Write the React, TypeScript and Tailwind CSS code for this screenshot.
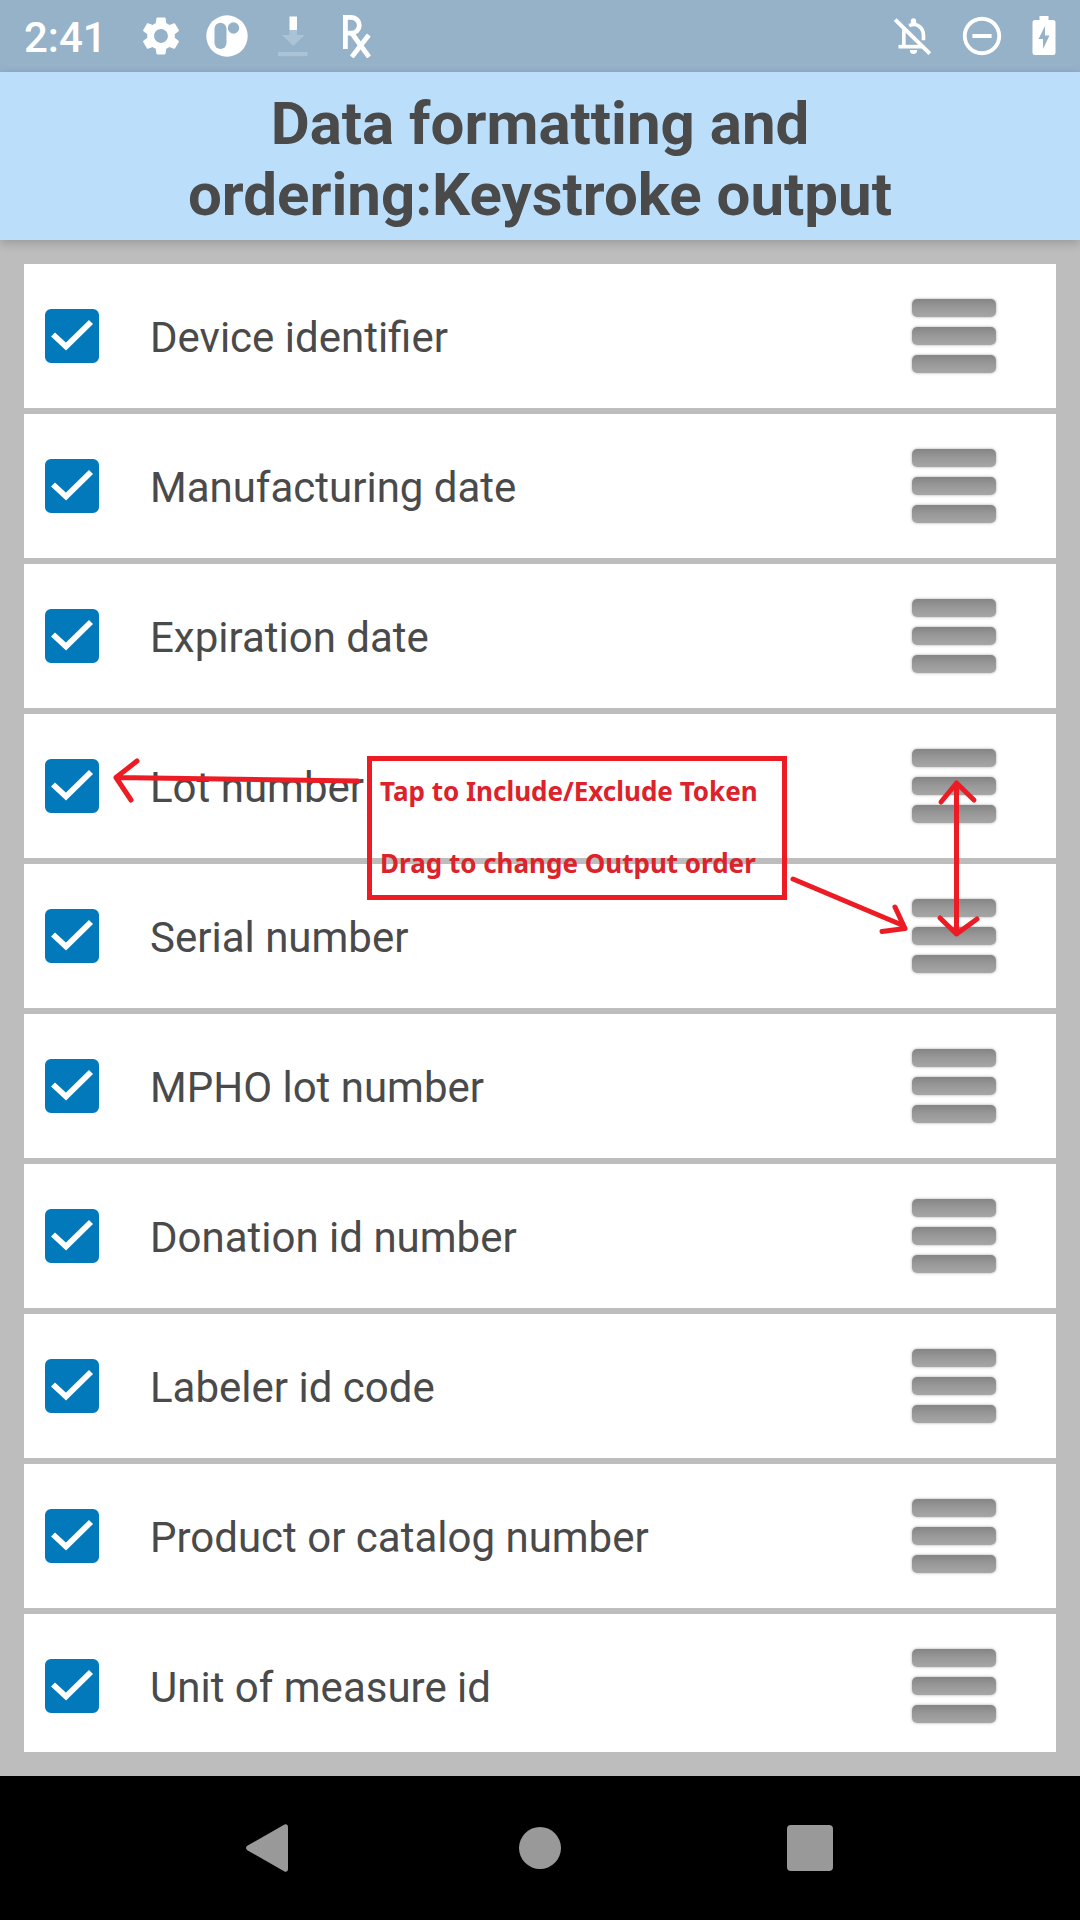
import { useState } from "react";
import { MdRemoveCircleOutline, MdSettings } from "react-icons/md";

const tokens = [
  "Device identifier",
  "Manufacturing date",
  "Expiration date",
  "Lot number",
  "Serial number",
  "MPHO lot number",
  "Donation id number",
  "Labeler id code",
  "Product or catalog number",
  "Unit of measure id",
];

function AppBadgeIcon() {
  return (
    <svg viewBox="0 0 42 42" className="size-[42px]" aria-hidden="true">
      <circle cx="21" cy="21" r="20.7" fill="#fff" />
      <rect x="8.5" y="7.8" width="12" height="26.2" rx="6" fill="#96b2c9" />
      <circle cx="27.5" cy="13" r="5.7" fill="#96b2c9" />
    </svg>
  );
}

function DownloadIcon() {
  return (
    <svg viewBox="0 0 30 42" className="h-[42px] w-[30px]" aria-hidden="true">
      <path d="M11.5 1.5h7.5V15h-7.5z" fill="#fff" />
      <path d="M11.5 15h7.5v5h7.5L15.3 31 4 20h7.500z" fill="#abc3d7" />
      <path d="M0 37h29.500v4.200H0z" fill="#abc3d7" />
    </svg>
  );
}

function PrescriptionIcon() {
  return (
    <svg
      viewBox="0 0 30 44"
      className="h-[44px] w-[30px]"
      fill="none"
      stroke="#fff"
      strokeWidth="4.800"
      aria-hidden="true"
    >
      <path d="M3.400 35V3.400h6a7.400 7.400 0 0 1 0 15.800H3.400" />
      <path d="M10 19.500 27 43" />
      <path d="M26.800 21 9.800 43" />
    </svg>
  );
}

function SilentIcon() {
  return (
    <svg
      viewBox="100 50 116 120"
      className="h-10 w-[39px]"
      fill="none"
      stroke="#fff"
      strokeWidth="11"
      aria-hidden="true"
    >
      <path d="M106 61 210 163" strokeWidth="12" />
      <path d="M132 86v56" />
      <path d="M116 142h70" />
      <path d="M148 79c22-10 43 4 43 30v14" />
      <path d="M153 74v-9a8 8 0 0 1 16 0v9z" fill="#fff" stroke="none" />
      <path d="M150 152h22a11 12 0 0 1-22 0z" fill="#fff" stroke="none" />
    </svg>
  );
}

function BatteryIcon() {
  return (
    <svg viewBox="0 0 24 40" className="h-10 w-6" aria-hidden="true">
      <path
        d="M7.500 0h9v4H21a2.500 2.500 0 0 1 2.500 2.500v30A2.500 2.500 0 0 1 21 39H3a2.500 2.500 0 0 1-2.500-2.500v-30A2.500 2.500 0 0 1 3 4h4.500z"
        fill="#fff"
      />
      <path d="M13 10v9.500h4.500L11 33v-10H6.500z" fill="#96b2c9" />
    </svg>
  );
}

function StatusBar() {
  return (
    <div className="flex h-[72px] shrink-0 items-center justify-between bg-[#96b2c9] px-6 text-white">
      <div className="flex items-center">
        <span className="pt-[3px] text-[42px] leading-[48px] font-medium">2:41</span>
        <MdSettings className="ml-[31px] size-[46px]" aria-hidden="true" />
        <div className="ml-[22px] flex items-center gap-[30px]">
          <AppBadgeIcon />
          <DownloadIcon />
          <span className="ml-1">
            <PrescriptionIcon />
          </span>
        </div>
      </div>
      <div className="flex items-center">
        <SilentIcon />
        <MdRemoveCircleOutline className="ml-[27px] size-[46px]" aria-hidden="true" />
        <span className="ml-[27px]">
          <BatteryIcon />
        </span>
      </div>
    </div>
  );
}

function DragHandle({ name }: { name: string }) {
  return (
    <button
      type="button"
      aria-label={`Reorder ${name}`}
      className="flex w-[84px] cursor-grab flex-col gap-[10px]"
    >
      {[0, 1, 2].map((bar) => (
        <span
          key={bar}
          className="h-[18px] w-full rounded-[5px] bg-linear-to-b from-[#858585] via-[#999999] via-50% to-[#a6a6a6] shadow-[0_0_3px_#a8a8a8]"
        />
      ))}
    </button>
  );
}

function TokenRow({ name }: { name: string }) {
  const [included, setIncluded] = useState(true);
  return (
    <li className="flex h-36 shrink-0 items-center justify-between bg-white pr-[60px] pl-[21px]">
      <label className="flex items-center gap-[51px]">
        <span className="relative size-[54px]">
          <input
            type="checkbox"
            checked={included}
            onChange={() => setIncluded(!included)}
            className="peer block size-[54px] appearance-none rounded-[6px] border-[5px] border-[#757575] checked:border-[#0279bb] checked:bg-[#0279bb]"
          />
          <svg
            viewBox="0 0 54 54"
            className="pointer-events-none absolute inset-0 hidden peer-checked:block"
            fill="none"
            stroke="#fff"
            strokeWidth="5.800"
            aria-hidden="true"
          >
            <path d="M8 25.500 21 37.600 46 13" />
          </svg>
        </span>
        <span className="pt-[3px] text-[42px] leading-[50px] text-[#4a4a4a]">{name}</span>
      </label>
      <DragHandle name={name} />
    </li>
  );
}

function Annotations() {
  return (
    <div className="pointer-events-none absolute top-0 left-0">
      <svg
        viewBox="0 0 1080 760"
        className="h-[760px] w-[1080px] max-w-none"
        fill="none"
        stroke="#ed1c24"
        strokeWidth="5"
        strokeLinecap="round"
        strokeLinejoin="round"
        aria-hidden="true"
      >
        <path d="M358 541 116 537.500M137 521 116 537.500 131 560" />
        <path d="M793 639 902 685M895 667 905 688.500 882 691.500" />
        <path d="M956.500 543V694M941 562 956.500 543 974 560M940 678 956.500 694 977 679" />
      </svg>
      <div className="absolute top-[516px] left-[367px] h-36 w-[420px] border-[5px] border-[#ed1c24] px-2 py-3 font-['Noto_Sans',sans-serif] text-[26px] leading-9 font-bold whitespace-nowrap text-[#dc222a]">
        <p>Tap to Include/Exclude Token</p>
        <p className="pt-9">Drag to change Output order</p>
      </div>
    </div>
  );
}

function NavigationBar() {
  return (
    <nav className="grid h-36 shrink-0 grid-cols-3 items-center justify-items-center bg-black px-[12.5%]">
      <button type="button" aria-label="Back">
        <svg viewBox="0 0 48 48" className="size-12" fill="#999" aria-hidden="true">
          <path d="M1.300 21.800 38.500.600Q42 -.500 42 3v42q0 3.500-3.500 2.400L1.300 26.200q-2.600-2.200 0-4.400z" />
        </svg>
      </button>
      <button type="button" aria-label="Home" className="size-[42px] rounded-full bg-[#999]" />
      <button type="button" aria-label="Overview" className="size-[46px] rounded-[4px] bg-[#999]" />
    </nav>
  );
}

export default function App() {
  return (
    <div className="flex h-screen flex-col bg-[#bdbdbd] font-[Roboto,sans-serif]">
      <StatusBar />
      <header className="z-10 shrink-0 bg-[#bbdefb] px-6 pt-4 pb-[10px] shadow-[0_3px_10px_rgba(0,0,0,0.2)]">
        <h1 className="text-center text-[60px] leading-[71px] font-bold text-[#4a4a4a]">
          Data formatting and
          <br />
          ordering:Keystroke output
        </h1>
      </header>
      <main className="relative min-h-0 flex-1 p-6">
        <ul className="flex h-full flex-col gap-[6px] overflow-y-auto [scrollbar-width:none]">
          {tokens.map((name) => (
            <TokenRow key={name} name={name} />
          ))}
        </ul>
        <Annotations />
      </main>
      <NavigationBar />
    </div>
  );
}
